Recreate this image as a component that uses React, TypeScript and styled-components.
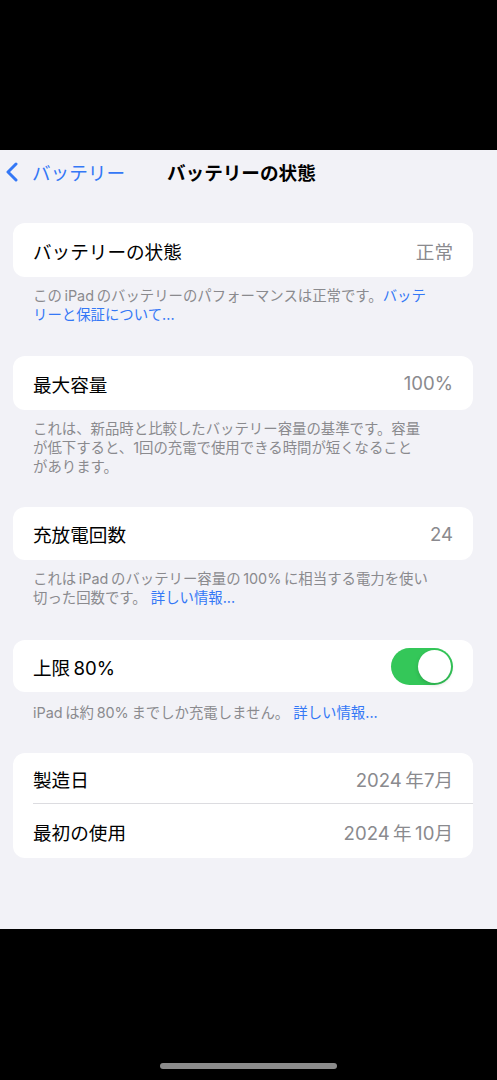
import styled, { createGlobalStyle } from 'styled-components';

const GlobalStyle = createGlobalStyle`
  html, body {
    margin: 0;
    padding: 0;
    background: #000;
  }
  * {
    box-sizing: border-box;
  }
`;

// 전체 화면 (위아래 검은 영역 포함)
const Page = styled.div`
  display: flex;
  flex-direction: column;
  width: 497px;
  height: 1080px;
  background-color: #000;
  font-family: Inter, 'Noto Sans CJK JP', sans-serif;
`;

const TopBlack = styled.div`
  height: 150px;
  flex-shrink: 0;
`;

const Screen = styled.div`
  display: flex;
  flex-direction: column;
  height: 779px;
  background-color: #f2f2f7;
`;

// 상단 네비게이션 바
const NavBar = styled.div`
  display: flex;
  align-items: center;
  height: 43px;
  padding-left: 5px;
`;

const BackButton = styled.div`
  display: flex;
  align-items: center;
  gap: 13px;
  color: #3478f6;
  font-size: 18.6px;
`;

const NavTitle = styled.div`
  margin-left: 42px;
  font-size: 18.6px;
  font-weight: 700;
  color: #000;
`;

const Content = styled.div`
  display: flex;
  flex-direction: column;
  width: 460px;
  margin-left: 13px;
  padding-top: 30px;
`;

// 흰색 카드 그룹
const Card = styled.div`
  display: flex;
  flex-direction: column;
  background-color: #fff;
  border-radius: 12px;
  overflow: hidden;
`;

const Row = styled.div<{ $h?: number; $divider?: boolean }>`
  display: flex;
  justify-content: space-between;
  align-items: center;
  height: ${(p) => p.$h ?? 54}px;
  padding-right: 20px;
  padding-left: ${(p) => (p.$divider ? '0' : '20px')};
  margin-left: ${(p) => (p.$divider ? '20px' : '0')};
  border-bottom: ${(p) => (p.$divider ? '1px solid #dcdce0' : 'none')};
`;

const Label = styled.span`
  font-size: 18.6px;
  color: #000;
`;

const Value = styled.span`
  font-size: 18.6px;
  color: #8a8a8e;
`;

// 카드 아래 설명 텍스트
const Footer = styled.div<{ $top?: number; $bottom?: number }>`
  padding: ${(p) => p.$top ?? 9}px 20px 0 20px;
  margin-bottom: ${(p) => p.$bottom ?? 31}px;
  font-size: 14.4px;
  line-height: 19px;
  color: #8a8a8e;
  white-space: nowrap;
`;

const Link = styled.span`
  color: #3478f6;
`;

// 스위치
const Switch = styled.div<{ $on: boolean }>`
  display: flex;
  align-items: center;
  justify-content: ${(p) => (p.$on ? 'flex-end' : 'flex-start')};
  width: 62px;
  height: 37px;
  padding: 2px;
  border-radius: 19px;
  background-color: ${(p) => (p.$on ? '#34c759' : '#e9e9ea')};
`;

const Knob = styled.div`
  width: 33px;
  height: 33px;
  border-radius: 50%;
  background-color: #fff;
  box-shadow: 0 2px 4px rgba(0, 0, 0, 0.15);
`;

const BottomBlack = styled.div`
  flex: 1;
  display: flex;
  justify-content: center;
  padding-top: 134px;
`;

const HomeIndicator = styled.div`
  width: 177px;
  height: 6px;
  border-radius: 3px;
  background-color: #8c8c8c;
`;

function Chevron() {
  return (
    <svg width="14" height="20" viewBox="0 0 14 20">
      <polyline
        points="11,2 3,10 11,18"
        fill="none"
        stroke="#3478f6"
        strokeWidth="3"
        strokeLinecap="round"
        strokeLinejoin="round"
      />
    </svg>
  );
}

const T = '\u2009';

function App() {
  return (
    <>
      <GlobalStyle />
      <Page>
        <TopBlack />
        <Screen>
          <NavBar>
            <BackButton>
              <Chevron />
              バッテリー
            </BackButton>
            <NavTitle>バッテリーの状態</NavTitle>
          </NavBar>

          <Content>
            <Card>
              <Row>
                <Label>バッテリーの状態</Label>
                <Value>正常</Value>
              </Row>
            </Card>
            <Footer $bottom={32}>
              この{T}iPad{T}のバッテリーのパフォーマンスは正常です。<Link>バッテ</Link>
              <br />
              <Link>リーと保証について...</Link>
            </Footer>

            <Card>
              <Row>
                <Label>最大容量</Label>
                <Value>100%</Value>
              </Row>
            </Card>
            <Footer $bottom={31}>
              これは、新品時と比較したバッテリー容量の基準です。容量
              <br />
              が低下すると、1回の充電で使用できる時間が短くなること
              <br />
              があります。
            </Footer>

            <Card>
              <Row $h={53}>
                <Label>充放電回数</Label>
                <Value>24</Value>
              </Row>
            </Card>
            <Footer $bottom={33}>
              これは{T}iPad{T}のバッテリー容量の{T}100%{T}に相当する電力を使い
              <br />
              切った回数です。 <Link>詳しい情報...</Link>
            </Footer>

            <Card>
              <Row $h={52}>
                <Label>上限{T}80%</Label>
                <Switch $on>
                  <Knob />
                </Switch>
              </Row>
            </Card>
            <Footer $top={11} $bottom={31}>
              iPad{T}は約{T}80%{T}までしか充電しません。 <Link>詳しい情報...</Link>
            </Footer>

            <Card>
              <Row $h={51} $divider>
                <Label>製造日</Label>
                <Value>2024{T}年7月</Value>
              </Row>
              <Row $h={54}>
                <Label>最初の使用</Label>
                <Value>2024{T}年{T}10月</Value>
              </Row>
            </Card>
          </Content>
        </Screen>
        <BottomBlack>
          <HomeIndicator />
        </BottomBlack>
      </Page>
    </>
  );
}

export default App;
